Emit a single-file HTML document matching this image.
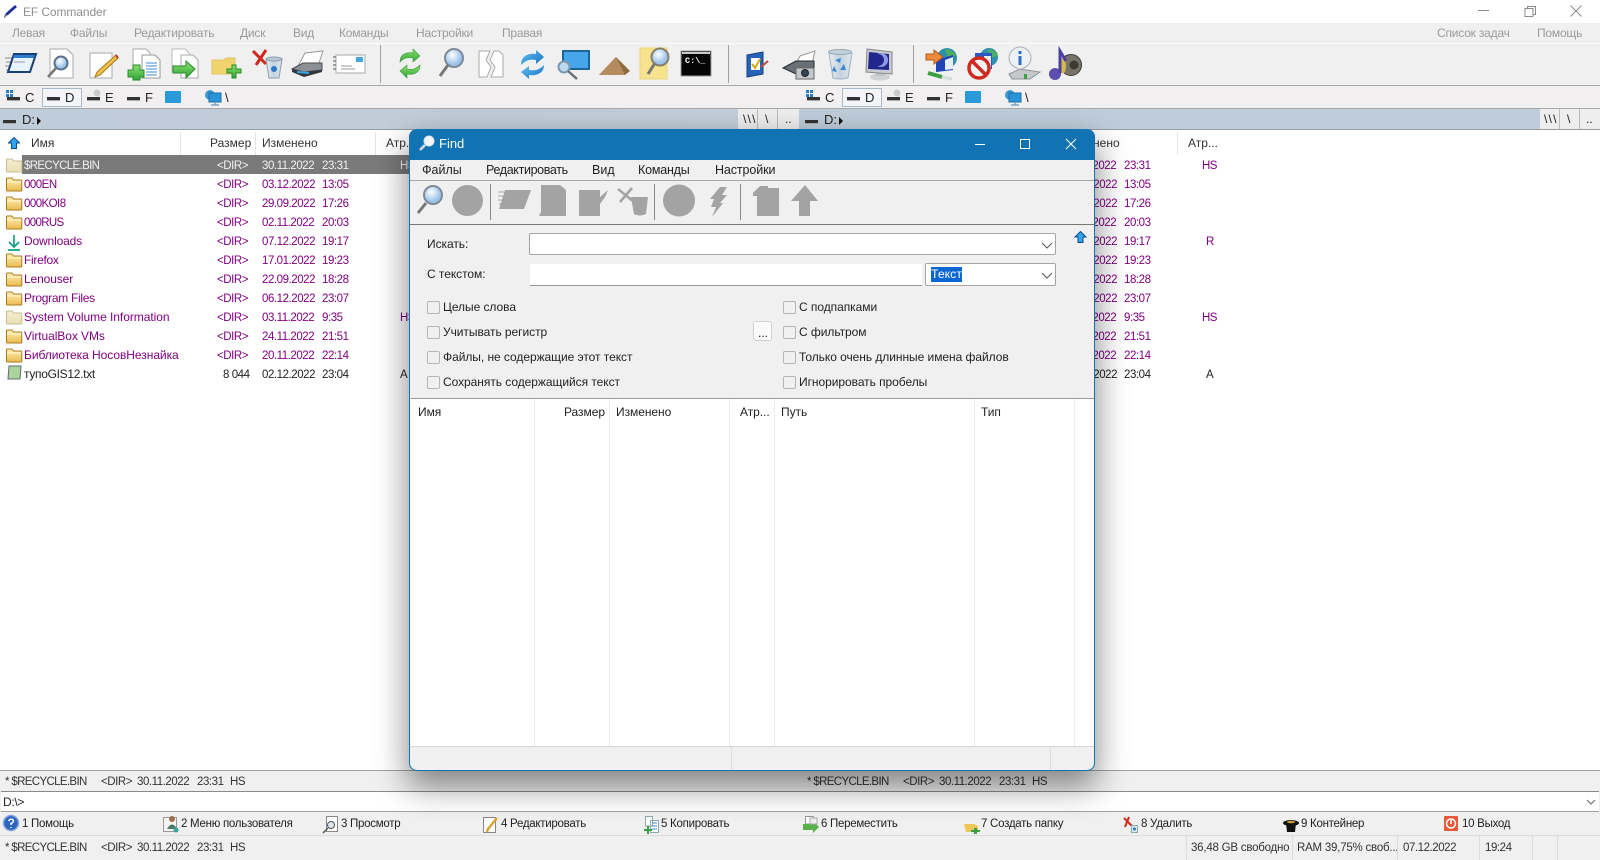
<!DOCTYPE html>
<html lang="ru"><head><meta charset="utf-8"><title>EF Commander</title>
<style>
html,body{margin:0;padding:0;background:#fff}
#p{position:relative;width:1600px;height:860px;overflow:hidden;background:#fff;font:12px/14px "Liberation Sans","Noto Sans CJK SC",sans-serif;color:#222}
#p div,#p span,#p svg{position:absolute}
.t{white-space:nowrap}
.m{color:#9a9a9a;top:26px;font-size:12px;letter-spacing:-.2px}
.dm{top:163px;font-size:12.5px;color:#222}
.h{top:136px;font-size:12px;color:#333}
.r{left:0;width:1600px;height:19px;color:#800080;font-size:12px}
.r span{top:3px;white-space:nowrap}
.f{color:#222}
.n{left:24px}
.d{left:217px}.a{left:262px}.b{left:322px}.x{left:400px}
.a2{left:1064px}.b2{left:1124px}.x2{left:1202px}
.d,.a,.b,.a2,.b2{font-size:11.5px;letter-spacing:-.45px}
.x,.x2{font-size:11.5px;letter-spacing:-.6px}
.r span.d,.r span.a,.r span.b,.r span.a2,.r span.b2,.r span.x,.r span.x2,.r span.c{top:4px}
.c{font-size:11.5px}
.l{background:#a8a8a8}
.cb{width:11px;height:11px;border:1px solid #b5b5b5;border-radius:2px;background:#f0f0f0}
.ct{font-size:12px;letter-spacing:-.05px;color:#222}
.fk{top:817px;font-size:11.5px;letter-spacing:-.27px;color:#222}
.st{top:841px;font-size:11.5px;letter-spacing:-.22px;color:#333}
.ss{font-size:11.5px;letter-spacing:-.45px;color:#333;white-space:nowrap}
.sn{letter-spacing:-.65px}
.dl{top:91px;font-size:13px;white-space:nowrap}
</style></head><body><div id="p">
<svg width="0" height="0" style="position:absolute"><defs>
<linearGradient id="gf" x1="0" y1="0" x2="0" y2="1"><stop offset="0" stop-color="#fff0b8"/><stop offset="1" stop-color="#eabb50"/></linearGradient>
<linearGradient id="gp" x1="0" y1="0" x2="0" y2="1"><stop offset="0" stop-color="#f4eecf"/><stop offset="1" stop-color="#eadfb4"/></linearGradient>
<linearGradient id="gb" x1="0" y1="0" x2="1" y2="1"><stop offset="0" stop-color="#62c3f5"/><stop offset="1" stop-color="#1570c0"/></linearGradient>
<linearGradient id="gg" x1="0" y1="0" x2="0" y2="1"><stop offset="0" stop-color="#8ee06a"/><stop offset="1" stop-color="#2ea63a"/></linearGradient>
<linearGradient id="gt" x1="0" y1="0" x2="1" y2="0"><stop offset="0" stop-color="#e6eef2"/><stop offset=".5" stop-color="#c2d2dc"/><stop offset="1" stop-color="#dfe8ec"/></linearGradient>
<radialGradient id="gl" cx=".4" cy=".35"><stop offset="0" stop-color="#fff"/><stop offset="1" stop-color="#9cc4ea"/></radialGradient>
<g id="fo"><path d="M.5 3.5V1.8Q.5 1 1.3 1H6L7.5 3H15Q15.8 3 15.8 3.8V13Q15.8 14 15 14H1.3Q.5 14 .5 13Z" fill="url(#gf)" stroke="#a97d1e"/><path d="M1 5H15.3" stroke="#fff6cf"/></g>
<g id="fp"><path d="M.5 3.5V1.8Q.5 1 1.3 1H6L7.5 3H15Q15.8 3 15.8 3.8V13Q15.8 14 15 14H1.3Q.5 14 .5 13Z" fill="url(#gp)" stroke="#c8bd95"/></g>
<g id="up"><path d="M5.5 0L11 5.5H8V11H3V5.5H0Z" fill="#31a6ec" stroke="#0b4d8e"/></g>
<g id="dr"><rect x="0" y="0" width="13" height="3" fill="#333"/><rect x="0" y="3" width="13" height="1" fill="#aaa"/></g>
<g id="nt"><circle cx="5" cy="6" r="5" fill="#3b9bd0"/><rect x="4" y="4" width="12" height="9" fill="#2b93d8" stroke="#1a6ea8"/><path d="M10 13V16M6 16H14" stroke="#7aa6c8" stroke-width="1.5"/></g>
</defs></svg>

<!-- title bar -->
<svg style="left:3px;top:3px" width="16" height="16" viewBox="0 0 16 16"><path d="M1 14L3 10L12 2L14 4L5 12Z" fill="#1c2f96"/><path d="M1 15L4 12" stroke="#999"/></svg>
<div class="t" style="left:23px;top:5px;font-size:12px;letter-spacing:-.1px;color:#8f8f8f">EF Commander</div>
<svg style="left:1470px;top:0" width="130" height="23" viewBox="0 0 130 23" fill="none" stroke="#8a8a8a"><path d="M8 10.5H19"/><path d="M55 8.500H63V16.500H55ZM57.500 8.500V6.500H65.500V14.500H63"/><path d="M100.500 5.500L111.500 16.500M111.500 5.500L100.500 16.500"/></svg>

<!-- menu -->
<div style="left:0;top:23px;width:1600px;height:20px;background:#f0f0f0"></div>
<span class="t m" style="left:12px">Левая</span><span class="t m" style="left:70px">Файлы</span><span class="t m" style="left:134px">Редактировать</span><span class="t m" style="left:240px">Диск</span><span class="t m" style="left:293px">Вид</span><span class="t m" style="left:339px">Команды</span><span class="t m" style="left:416px">Настройки</span><span class="t m" style="left:502px">Правая</span><span class="t m" style="left:1437px">Список задач</span><span class="t m" style="left:1537px">Помощь</span>

<!-- toolbar -->
<div style="left:0;top:43px;width:1600px;height:42px;background:#f0f0f0;border-top:1px solid #fafafa;box-sizing:border-box"></div>
<div class="l" style="left:0;top:85px;width:1600px;height:1px"></div>
<div style="left:0;top:86px;width:1600px;height:22px;background:#f1efef"></div>
<div class="l" style="left:0;top:108px;width:1600px;height:1px"></div>
<div style="left:0;top:109px;width:800px;height:20px;background:linear-gradient(90deg,#bfccd9,#c2ced9)"></div>
<div style="left:800px;top:109px;width:800px;height:20px;background:#bfcddb"></div>
<div style="left:0;top:129px;width:1600px;height:1px;background:#9a9a9a"></div>

<svg style="left:0;top:0" width="1600" height="130" viewBox="0 0 1600 130">
<!-- 1 window -->
<g><path d="M5 58H12M6 62H11M5 66H10M6 70H9" stroke="#8a8a8a"/><path d="M14 54H36L30 72H8Z" fill="#e9f3fb" stroke="#173f78" stroke-width="2"/><path d="M14 55H35L34 58H13Z" fill="#2f7fd0"/><path d="M14 62H25" stroke="#999"/></g>
<!-- 2 doc mag -->
<g><path d="M50 49H67L73 55V78H50Z" fill="#fff" stroke="#aaa"/><circle cx="61" cy="63" r="6.500" fill="url(#gl)" stroke="#5a6e86" stroke-width="2"/><path d="M56 68L48 77" stroke="#777" stroke-width="2.500"/></g>
<!-- 3 doc pencil -->
<g><path d="M90 53H112V78H90Z" fill="#fff" stroke="#aaa"/><path d="M116 55L118 58L100 75L95 77L97 72Z" fill="#f0c14a" stroke="#a8771c"/><path d="M116 55L118 58" stroke="#c0392b" stroke-width="2"/></g>
<!-- 4 docs plus -->
<g><path d="M133 49H146L150 53V72H133Z" fill="#fff" stroke="#aaa"/><path d="M142 55H155L160 60V78H142Z" fill="#fff" stroke="#999"/><path d="M146 63H157M146 66H157M146 69H157M146 72H157M146 75H157" stroke="#3b8fd0"/><path d="M133 65H140V70H144V77H140V80H133V77H128V70H133Z" fill="url(#gg)" stroke="#2a8a2e"/></g>
<!-- 5 docs arrow -->
<g><path d="M172 49H185L189 53V72H172Z" fill="#fff" stroke="#bbb"/><path d="M181 55H193L198 60V78H181Z" fill="#fff" stroke="#aaa"/><path d="M173 66H186V61L195 69L186 78V73H173Z" fill="url(#gg)" stroke="#2a8a2e"/></g>
<!-- 6 folder plus -->
<g><path d="M212 60H224L226 58H235V74H212Z" fill="#f0d36f" stroke="#e2c35b"/><path d="M232 65H236V69H241V73H236V78H232V73H227V69H232Z" fill="url(#gg)" stroke="#2a8a2e"/></g>
<!-- 7 delete -->
<g><path d="M253 51L266 64M266 50L256 65" stroke="#d0281c" stroke-width="3"/><path d="M266 59H282L279 78H269Z" fill="url(#gt)" stroke="#8aa0ac"/><ellipse cx="274" cy="59" rx="8" ry="2" fill="#b9c8d2" stroke="#8aa0ac"/><circle cx="274" cy="69" r="3" fill="#2f78c8"/></g>
<!-- 8 printer -->
<g><path d="M305 53L323 51L318 66H298Z" fill="#fff" stroke="#999"/><path d="M292 69L303 63H322V70L304 72Z" fill="#8b9095" stroke="#4a4e52"/><path d="M292 69L304 72L322 70V72L304 77L292 72Z" fill="#33373b"/><path d="M297 72L309 73" stroke="#37a6dd" stroke-width="2"/></g>
<!-- 9 envelope -->
<g><rect x="336" y="55" width="29" height="18" fill="#fff" stroke="#aaa"/><rect x="356" y="57" width="7" height="5" fill="#47a7d8"/><path d="M341 66H352M341 69H355" stroke="#999"/><path d="M333 57H336M333 61H336M333 65H336M333 69H336" stroke="#555"/></g>
<rect x="380" y="45" width="1" height="38" fill="#a0a0a0"/>
<!-- 10 green refresh -->
<g fill="url(#gg)" stroke="#3a9b3c" stroke-width=".6"><path d="M400 62C400 53 408 52 413 53V49L420 56L413 62V58C407 57 404 58 400 62Z"/><path d="M420 65C420 74 412 75 407 74V78L400 71L407 65V69C413 70 416 69 420 65Z"/></g>
<!-- 11 mag -->
<g><circle cx="454" cy="58" r="9" fill="url(#gl)" stroke="#7f8a96" stroke-width="2"/><path d="M448 65L440 76" stroke="#777" stroke-width="3"/></g>
<!-- 12 split doc -->
<g fill="#fff" stroke="#aaa"><path d="M479 51H490L486 60L491 67L487 77H479Z"/><path d="M494 51H499L503 55V77H491L495 67L490 60Z"/></g>
<!-- 13 blue sync -->
<g fill="url(#gb)"><path d="M521 65C521 55 530 53 536 54V50L544 57L536 64V60C530 59 526 60 521 65Z"/><path d="M544 65C544 74 535 76 529 75V79L521 72L529 66V70C535 71 539 70 544 65Z"/></g>
<!-- 14 monitor -->
<g><rect x="563" y="51" width="26" height="18" fill="#45a6ec" stroke="#1c6696" stroke-width="2"/><circle cx="564" cy="67" r="5.500" fill="#bcd8f0" stroke="#7d98b0" stroke-width="2"/><path d="M568 71L577 79" stroke="#66707a" stroke-width="2.500"/></g>
<!-- 15 pyramid -->
<g><path d="M599 75L616 57L630 71L625 75Z" fill="#8e6a3c"/><path d="M616 57L625 75H599Z" fill="#b48b5c"/></g>
<!-- 16 folder mag -->
<g><rect x="640" y="48" width="27" height="31" fill="#f7e28d" stroke="#ecd67a"/><circle cx="660" cy="57" r="8.500" fill="url(#gl)" stroke="#86806a" stroke-width="2"/><path d="M655 63L648 74" stroke="#777" stroke-width="3"/></g>
<!-- 17 cmd -->
<g><rect x="681" y="51" width="30" height="25" fill="#050505" stroke="#9a9a9a"/><rect x="682" y="52" width="28" height="2" fill="#c8c8c8"/><text x="685" y="63" fill="#fff" font-family="Liberation Mono,monospace" font-size="8.500" font-weight="700">C:\_</text></g>
<rect x="728" y="45" width="1" height="38" fill="#a0a0a0"/>
<!-- 18 check -->
<g><path d="M747 55L763 52V74L747 77Z" fill="#2663b8" stroke="#15407e"/><rect x="751" y="58" width="9" height="12" fill="#fff"/><path d="M752 64L755 68L760 59" fill="none" stroke="#d6a91a" stroke-width="2"/><path d="M761 67L768 61" stroke="#c04a3a" stroke-width="2"/></g>
<!-- 19 printer camera -->
<g><path d="M800 56L815 51L812 64H796Z" fill="#fff" stroke="#999"/><path d="M783 68L796 61H814V68L796 74Z" fill="#6a7075" stroke="#24282c"/><rect x="796" y="68" width="18" height="11" fill="#c4c8cc" stroke="#666"/><circle cx="805" cy="73" r="3.500" fill="#345" stroke="#222"/></g>
<!-- 20 recycle -->
<g><path d="M829 53H852L848 78Q840 80 833 78Z" fill="url(#gt)" stroke="#9fb2bf"/><ellipse cx="840" cy="52" rx="11.500" ry="2.500" fill="#c3d2dc" stroke="#95a8b5"/><path d="M835 60L841 58L840 63ZM844 64L846 70L840 70ZM834 66L837 72L832 71Z" fill="#3b86d2"/></g>
<!-- 21 monitor -->
<g><ellipse cx="880" cy="77" rx="10" ry="3.500" fill="#cfd1d2"/><rect x="876" y="71" width="8" height="5" fill="#bfc1c2"/><path d="M867 49L892 52V74L866 72Z" fill="#c8cbd0" stroke="#888"/><path d="M869 52L889 54V70L868 69Z" fill="#22268c"/><circle cx="881" cy="60" r="7" fill="#8f9be2"/><circle cx="878" cy="60" r="6" fill="#22268c"/></g>
<rect x="913" y="45" width="1" height="38" fill="#a0a0a0"/>
<!-- 22 -->
<g><circle cx="947" cy="58" r="10" fill="#2f8fb0"/><path d="M945 49Q954 50 956 56L948 58Z" fill="#4cae5e"/><path d="M936 60L953 55V70L936 72Z" fill="#1f44b8"/><path d="M945 60L953 57V69L945 70Z" fill="#e8eef6"/><path d="M926 54H934V50L943 57L934 64V60H926Z" fill="#ee8a3c" stroke="#b05c15"/><path d="M928 73L942 77" stroke="#3aa043" stroke-width="4"/><path d="M942 77L952 79" stroke="#d8dcdc" stroke-width="3"/></g>
<!-- 23 -->
<g><circle cx="989" cy="57" r="9" fill="#2f8fb0"/><path d="M988 49Q996 50 998 56L990 58Z" fill="#4cae5e"/><rect x="975" y="53" width="17" height="16" fill="#2d58c0"/><rect x="984" y="56" width="7" height="12" fill="#e8eef6"/><circle cx="979" cy="68" r="10" fill="#f4f4f4" stroke="#cf2a20" stroke-width="3.500"/><path d="M972 61L986 75" stroke="#cf2a20" stroke-width="3.500"/></g>
<!-- 24 -->
<g><path d="M1020 47C1014 47 1009 52 1009 58C1009 63 1013 67 1017 68L1020 72L1023 68C1027 67 1031 63 1031 58C1031 52 1026 47 1020 47Z" fill="#eef1f4" stroke="#aab0b8"/><rect x="1018.500" y="56" width="3" height="9" fill="#2a6ec8"/><rect x="1018.500" y="51" width="3" height="3" fill="#2a6ec8"/><path d="M1009 74L1020 69L1040 72L1030 79H1012Z" fill="#c5c8cb" stroke="#8e9296"/><rect x="1024" y="74" width="3" height="5" fill="#3aa043"/></g>
<!-- 25 -->
<g><circle cx="1071" cy="65" r="10.500" fill="#77736a" stroke="#3d3a34"/><circle cx="1074" cy="65" r="4.500" fill="#3c3a34"/><ellipse cx="1063" cy="66" rx="3" ry="7.500" fill="#d8b94e"/><circle cx="1055" cy="74" r="6" fill="#5c4fb0"/><path d="M1060 73V51L1066 61" fill="none" stroke="#4b40a0" stroke-width="3"/></g>

<!-- drive bars -->
<g id="dv"><rect x="6" y="90" width="3" height="3" fill="#2a7cc8"/><rect x="10" y="90" width="3" height="3" fill="#2a7cc8"/><rect x="6" y="94" width="3" height="3" fill="#2a7cc8"/><rect x="10" y="94" width="3" height="3" fill="#2a7cc8"/><use href="#dr" x="7" y="97"/>
<rect x="42.500" y="88.500" width="39" height="18" fill="#f3f5f8" stroke="#a9b8cc"/><use href="#dr" x="47" y="97"/><use href="#dr" x="87" y="97"/><circle cx="97" cy="93" r="3.500" fill="#ccc"/><use href="#dr" x="127" y="97"/><rect x="165" y="91" width="16" height="12" rx="1" fill="#2a9bd8"/><use href="#nt" x="205" y="89"/></g>
<use href="#dv" x="800"/>
<use href="#dr" x="3" y="120"/><path d="M37 117L41 121L37 125Z" fill="#111"/><use href="#dr" x="805" y="120"/><path d="M839 117L843 121L839 125Z" fill="#111"/>
</svg>
<span class="dl" style="left:25px">C</span><span class="dl" style="left:65px">D</span><span class="dl" style="left:105px">E</span><span class="dl" style="left:145px">F</span><span class="dl" style="left:225px">\</span>
<span class="dl" style="left:825px">C</span><span class="dl" style="left:865px">D</span><span class="dl" style="left:905px">E</span><span class="dl" style="left:945px">F</span><span class="dl" style="left:1025px">\</span>
<span class="t" style="left:22px;top:113px;font-size:13px">D:</span><span class="t" style="left:824px;top:113px;font-size:13px">D:</span>
<!-- path buttons -->
<div style="left:738px;top:109px;width:61px;height:20px;background:#eee"></div><div style="left:757px;top:109px;width:1px;height:20px;background:#bbb"></div><div style="left:777px;top:109px;width:1px;height:20px;background:#bbb"></div>
<span class="t" style="left:743px;top:112px;letter-spacing:1.2px">\\\</span><span class="t" style="left:765px;top:112px">\</span><span class="t" style="left:785px;top:112px">..</span>
<div style="left:1540px;top:109px;width:60px;height:20px;background:#eee"></div><div style="left:1559px;top:109px;width:1px;height:20px;background:#bbb"></div><div style="left:1579px;top:109px;width:1px;height:20px;background:#bbb"></div>
<span class="t" style="left:1544px;top:112px;letter-spacing:1.2px">\\\</span><span class="t" style="left:1567px;top:112px">\</span><span class="t" style="left:1586px;top:112px">..</span>

<!-- headers -->
<svg style="left:8px;top:137px" width="12" height="12" viewBox="-.5 -.5 12 12"><use href="#up"/></svg>
<span class="t h" style="left:31px">Имя</span><span class="t h" style="left:210px">Размер</span><span class="t h" style="left:262px">Изменено</span><span class="t h" style="left:386px">Атр...</span>
<div style="left:180px;top:132px;width:1px;height:23px;background:#e5e5e5"></div><div style="left:255px;top:132px;width:1px;height:23px;background:#e5e5e5"></div><div style="left:375px;top:132px;width:1px;height:23px;background:#e5e5e5"></div><div style="left:1177px;top:132px;width:1px;height:23px;background:#e5e5e5"></div>
<span class="t h" style="left:1064px">Изменено</span><span class="t h" style="left:1188px">Атр...</span>

<!-- rows -->
<div style="left:22px;top:155px;width:778px;height:19px;background:#7a7a7a"></div>
<div class="r" style="top:155px;color:#f2f2f2"><span class="n c" style="letter-spacing:-.65px">$RECYCLE.BIN</span><span class="d">&lt;DIR&gt;</span><span class="a">30.11.2022</span><span class="b">23:31</span><span class="x">HS</span></div>
<div class="r" style="top:155px"><span class="a2">30.11.2022</span><span class="b2">23:31</span><span class="x2">HS</span></div>
<div class="r" style="top:174px"><span class="n c" style="letter-spacing:-.5px">000EN</span><span class="d">&lt;DIR&gt;</span><span class="a">03.12.2022</span><span class="b">13:05</span><span class="a2">03.12.2022</span><span class="b2">13:05</span></div>
<div class="r" style="top:193px"><span class="n c" style="letter-spacing:-.55px">000KOI8</span><span class="d">&lt;DIR&gt;</span><span class="a">29.09.2022</span><span class="b">17:26</span><span class="a2">29.09.2022</span><span class="b2">17:26</span></div>
<div class="r" style="top:212px"><span class="n c" style="letter-spacing:-.65px">000RUS</span><span class="d">&lt;DIR&gt;</span><span class="a">02.11.2022</span><span class="b">20:03</span><span class="a2">02.11.2022</span><span class="b2">20:03</span></div>
<div class="r" style="top:231px"><span class="n" style="letter-spacing:-.15px">Downloads</span><span class="d">&lt;DIR&gt;</span><span class="a">07.12.2022</span><span class="b">19:17</span><span class="a2">07.12.2022</span><span class="b2">19:17</span><span class="x2" style="left:1206px">R</span></div>
<div class="r" style="top:250px"><span class="n" style="letter-spacing:-.3px">Firefox</span><span class="d">&lt;DIR&gt;</span><span class="a">17.01.2022</span><span class="b">19:23</span><span class="a2">17.01.2022</span><span class="b2">19:23</span></div>
<div class="r" style="top:269px"><span class="n" style="letter-spacing:-.12px">Lenouser</span><span class="d">&lt;DIR&gt;</span><span class="a">22.09.2022</span><span class="b">18:28</span><span class="a2">22.09.2022</span><span class="b2">18:28</span></div>
<div class="r" style="top:288px"><span class="n" style="letter-spacing:-.3px">Program Files</span><span class="d">&lt;DIR&gt;</span><span class="a">06.12.2022</span><span class="b">23:07</span><span class="a2">06.12.2022</span><span class="b2">23:07</span></div>
<div class="r" style="top:307px"><span class="n" style="letter-spacing:-.05px">System Volume Information</span><span class="d">&lt;DIR&gt;</span><span class="a">03.11.2022</span><span class="b">9:35</span><span class="x">HS</span><span class="a2">03.11.2022</span><span class="b2">9:35</span><span class="x2">HS</span></div>
<div class="r" style="top:326px"><span class="n" style="letter-spacing:-.07px">VirtualBox VMs</span><span class="d">&lt;DIR&gt;</span><span class="a">24.11.2022</span><span class="b">21:51</span><span class="a2">24.11.2022</span><span class="b2">21:51</span></div>
<div class="r" style="top:345px"><span class="n" style="letter-spacing:-.05px">Библиотека НосовНезнайка</span><span class="d">&lt;DIR&gt;</span><span class="a">20.11.2022</span><span class="b">22:14</span><span class="a2">20.11.2022</span><span class="b2">22:14</span></div>
<div class="r f" style="top:364px"><span class="n" style="letter-spacing:-.3px">тупоGIS12.txt</span><span class="d" style="left:223px">8 044</span><span class="a">02.12.2022</span><span class="b">23:04</span><span class="x">A</span><span class="a2">02.12.2022</span><span class="b2">23:04</span><span class="x2" style="left:1206px">A</span></div>
<svg style="left:6px;top:155px" width="17" height="230" viewBox="0 0 17 230">
<use href="#fp" y="3"/><use href="#fo" y="22"/><use href="#fo" y="41"/><use href="#fo" y="60"/>
<path d="M8 80V92M3 87L8 92L13 87M2 95H14" fill="none" stroke="#14a085" stroke-width="1.700"/>
<use href="#fo" y="98"/><use href="#fo" y="117"/><use href="#fo" y="136"/><use href="#fp" y="155"/><use href="#fo" y="174"/><use href="#fo" y="193"/>
<path d="M3 211H15L14 224H2Z" fill="#a9d59a" stroke="#667"/>
</svg>

<!-- bottom -->
<div style="left:0;top:770px;width:1600px;height:90px;background:#f0f0f0"></div>
<div style="left:0;top:770px;width:1600px;height:1px;background:#a0a0a0"></div>
<span class="ss sn" style="left:5px;top:775px">* $RECYCLE.BIN</span><span class="ss" style="left:101px;top:775px">&lt;DIR&gt;</span><span class="ss" style="left:137px;top:775px">30.11.2022</span><span class="ss" style="left:197px;top:775px">23:31</span><span class="ss" style="left:230px;top:775px">HS</span>
<span class="ss sn" style="left:807px;top:775px">* $RECYCLE.BIN</span><span class="ss" style="left:903px;top:775px">&lt;DIR&gt;</span><span class="ss" style="left:939px;top:775px">30.11.2022</span><span class="ss" style="left:999px;top:775px">23:31</span><span class="ss" style="left:1032px;top:775px">HS</span>
<div style="left:1px;top:791px;width:1598px;height:21px;background:#fff;border-top:1px solid #8a8a8a;border-bottom:1px solid #a0a0a0;box-sizing:border-box"></div>
<span class="t" style="left:3px;top:795px;font-size:12px;letter-spacing:-.3px">D:\&gt;</span>
<svg style="left:1585px;top:797px" width="12" height="10" viewBox="0 0 12 10"><path d="M2 3L6 7L10 3" fill="none" stroke="#666"/></svg>
<div style="left:0;top:835px;width:1600px;height:1px;background:#dcdcdc"></div>

<span class="t fk" style="left:22px">1 Помощь</span><span class="t fk" style="left:181px">2 Меню пользователя</span><span class="t fk" style="left:341px">3 Просмотр</span><span class="t fk" style="left:501px">4 Редактировать</span><span class="t fk" style="left:661px">5 Копировать</span><span class="t fk" style="left:821px">6 Переместить</span><span class="t fk" style="left:981px">7 Создать папку</span><span class="t fk" style="left:1141px">8 Удалить</span><span class="t fk" style="left:1301px">9 Контейнер</span><span class="t fk" style="left:1462px">10 Выход</span>
<svg style="left:0;top:812px" width="1480" height="24" viewBox="0 0 1480 24">
<circle cx="11" cy="11" r="7.500" fill="#2a63c0" stroke="#89a8d8" stroke-width="1.500"/><path d="M8.500 9Q11 5.500 13.500 8.500Q13.500 10.500 11 11.500V13M11 15V16" fill="none" stroke="#fff" stroke-width="1.500"/>
<rect x="163.500" y="5.500" width="13" height="14" fill="#f4f4f4" stroke="#999"/><circle cx="172" cy="7" r="3" fill="#a0724a"/><path d="M167 17Q172 8 177 17Z" fill="#4b7a66"/><circle cx="176" cy="18" r="2.500" fill="#3aa39a"/>
<path d="M326.500 4.500H337.500V19.500H326.500Z" fill="#fff" stroke="#888"/><circle cx="331" cy="13" r="3.500" fill="#dbe8f3" stroke="#555"/><path d="M328 16L323 21" stroke="#555" stroke-width="1.500"/>
<rect x="483.500" y="5.500" width="12" height="15" fill="#fff" stroke="#888"/><path d="M497 6L488 17L487 20" fill="none" stroke="#d9a431" stroke-width="2.500"/>
<path d="M645.500 4.500H652.500V14H645.500ZM650.500 8.500H658.500V20.500H650.500Z" fill="#fff" stroke="#8aa"/><path d="M652 11H657M652 14H657M652 17H657" stroke="#3b8fd0"/><path d="M644 17H647V14H649V17H652V19H649V22H647V19H644Z" fill="#3aa043"/>
<path d="M805.500 4.500H813.500V12H805.500Z" fill="#fff" stroke="#999"/><path d="M803 12H813V9L819 15L813 21V18H803Z" fill="#58b148"/><rect x="810" y="6" width="7" height="6" fill="#eee" stroke="#aaa"/>
<path d="M964 12H974L978 14V20H966Z" fill="#efc758"/><path d="M974 16H977V18H980V20H977V22H974V20H971V18H974Z" fill="#3aa043"/>
<path d="M1124 6L1133 15M1129 5L1125 15" stroke="#d0281c" stroke-width="2"/><rect x="1131.500" y="13.500" width="6" height="7" fill="#dce8f0" stroke="#8aa"/><circle cx="1134.500" cy="17" r="1.500" fill="#2f78c8"/>
<ellipse cx="1291" cy="11" rx="8" ry="3" fill="#111"/><path d="M1286 11H1296L1295 20H1287Z" fill="#111"/><ellipse cx="1291" cy="10" rx="4" ry="1.300" fill="#c9a030"/>
<rect x="1444" y="4" width="14" height="15" rx="1" fill="#e8583a"/><circle cx="1451" cy="11.500" r="4.500" fill="none" stroke="#fff" stroke-width="1.500"/><path d="M1451 8V12" stroke="#fff" stroke-width="1.500"/>
</svg>
<span class="ss sn" style="left:5px;top:841px">* $RECYCLE.BIN</span><span class="ss" style="left:101px;top:841px">&lt;DIR&gt;</span><span class="ss" style="left:137px;top:841px">30.11.2022</span><span class="ss" style="left:197px;top:841px">23:31</span><span class="ss" style="left:230px;top:841px">HS</span>
<span class="t st" style="left:1191px">36,48 GB свободно</span><span class="t st" style="left:1297px">RAM 39,75% своб...</span><span class="t st" style="left:1403px;letter-spacing:-.45px">07.12.2022</span><span class="t st" style="left:1485px;letter-spacing:-.45px">19:24</span>
<div style="left:1186px;top:836px;width:1px;height:24px;background:#dcdcdc"></div><div style="left:1292px;top:836px;width:1px;height:24px;background:#dcdcdc"></div><div style="left:1397px;top:836px;width:1px;height:24px;background:#dcdcdc"></div><div style="left:1479px;top:836px;width:1px;height:24px;background:#dcdcdc"></div><div style="left:1532px;top:836px;width:1px;height:24px;background:#dcdcdc"></div><div style="left:1557px;top:836px;width:1px;height:24px;background:#dcdcdc"></div>

<!-- Dialog -->
<div style="left:409px;top:129px;width:686px;height:642px;background:#f0f0f0;border-radius:8px;box-sizing:border-box;border:1px solid #1173b3;border-top:0;box-shadow:0 14px 32px 2px rgba(0,0,0,.45)"></div>
<div style="left:409px;top:129px;width:686px;height:31px;background:#1173b3;border-radius:8px 8px 0 0"></div>
<svg style="left:418px;top:134px" width="18" height="20" viewBox="0 0 18 20"><circle cx="11" cy="7" r="5" fill="#eef5fb" stroke="#dbe6ee"/><path d="M7 11L2 16" stroke="#ddd" stroke-width="2.500"/></svg>
<span class="t" style="left:439px;top:137px;font-size:13px;color:#fff">Find</span>
<svg style="left:960px;top:129px" width="135" height="31" viewBox="0 0 135 31" fill="none" stroke="#fff"><path d="M15 15.500H25"/><path d="M60.500 10.500H69.500V19.500H60.500Z"/><path d="M106 10L116 20M116 10L106 20"/></svg>
<span class="t dm" style="left:422px">Файлы</span><span class="t dm" style="left:486px;letter-spacing:-.35px">Редактировать</span><span class="t dm" style="left:592px">Вид</span><span class="t dm" style="left:638px;letter-spacing:-.2px">Команды</span><span class="t dm" style="left:715px;letter-spacing:-.1px">Настройки</span>
<div class="l" style="left:410px;top:180px;width:684px;height:1px"></div>
<div style="left:410px;top:224px;width:684px;height:1px;background:#777"></div>
<svg style="left:410px;top:181px" width="420" height="43" viewBox="410 181 420 43">
<circle cx="433" cy="195" r="9" fill="url(#gl)" stroke="#7f8a96" stroke-width="2"/><path d="M426 203L418 213" stroke="#777" stroke-width="3"/>
<g fill="#a3a3a3"><circle cx="467.500" cy="200.500" r="15.500"/>
<path d="M505 190H531L524 209H499Z"/><path d="M498 192H504M498 196H503M498 200H502M499 204H501" stroke="#a3a3a3"/>
<path d="M541 185H560L566 190V216H539L541 212Z"/><path d="M579 190H600V197L608 190L605 197L600 204V216H579Z"/>
<path d="M631 197H648L646 214Q640 217 634 214Z"/><path d="M618 189L634 202M632 188L620 202" stroke="#a3a3a3" stroke-width="2.500" fill="none"/>
<circle cx="679" cy="200.500" r="16"/><path d="M720 187H727L722 195H727L720 203H723L712 217L716 207H711L714 199H710Z"/>
<path d="M753 193L760 186H768V188H779V216H757V196H753Z"/><path d="M805 185L818 201H810V216H799V201H791Z"/></g>
<g fill="#8a8a8a"><rect x="490" y="184" width="1" height="36"/><rect x="654" y="184" width="1" height="36"/><rect x="740" y="184" width="1" height="36"/></g>
</svg>
<span class="t ct" style="left:427px;top:237px">Искать:</span><span class="t ct" style="left:427px;top:267px">С текстом:</span>
<div style="left:529px;top:233px;width:527px;height:22px;background:#fff;border:1px solid #a5a5a5;border-radius:2px;box-sizing:border-box"></div>
<div style="left:530px;top:264px;width:392px;height:22px;background:#fff;border-bottom:1px solid #999;box-sizing:border-box"></div>
<div style="left:925px;top:263px;width:131px;height:23px;background:#fff;border:1px solid #a5a5a5;border-radius:2px;box-sizing:border-box"></div>
<span class="t" style="left:931px;top:267px;height:15px;background:#0a66d0;color:#fff;font-size:12.3px;line-height:15px">Текст</span>
<svg style="left:1040px;top:238px" width="14" height="44" viewBox="0 0 14 44" fill="none" stroke="#555"><path d="M2 5L7 10L12 5M2 35L7 40L12 35"/></svg>
<svg style="left:1074px;top:231px" width="13" height="13" viewBox="-1 -.5 13 13"><use href="#up"/></svg>

<div class="cb" style="left:427px;top:301px"></div><span class="t ct" style="left:443px;top:300px">Целые слова</span>
<div class="cb" style="left:427px;top:326px"></div><span class="t ct" style="left:443px;top:325px">Учитывать регистр</span>
<div class="cb" style="left:427px;top:351px"></div><span class="t ct" style="left:443px;top:350px">Файлы, не содержащие этот текст</span>
<div class="cb" style="left:427px;top:376px"></div><span class="t ct" style="left:443px;top:375px">Сохранять содержащийся текст</span>
<div class="cb" style="left:783px;top:301px"></div><span class="t ct" style="left:799px;top:300px">С подпапками</span>
<div class="cb" style="left:783px;top:326px"></div><span class="t ct" style="left:799px;top:325px">С фильтром</span>
<div class="cb" style="left:783px;top:351px"></div><span class="t ct" style="left:799px;top:350px">Только очень длинные имена файлов</span>
<div class="cb" style="left:783px;top:376px"></div><span class="t ct" style="left:799px;top:375px">Игнорировать пробелы</span>
<div style="left:753px;top:321px;width:19px;height:20px;background:#fbfbfb;border:1px solid #d0d0d0;border-radius:3px;box-sizing:border-box"></div><span class="t" style="left:758px;top:326px;font-size:12px">...</span>

<div style="left:411px;top:398px;width:683px;height:348px;background:#fff;border-top:1px solid #9a9a9a;box-sizing:border-box"></div>
<span class="t ct" style="left:418px;top:405px">Имя</span><span class="t ct" style="left:564px;top:405px">Размер</span><span class="t ct" style="left:616px;top:405px">Изменено</span><span class="t ct" style="left:740px;top:405px">Атр...</span><span class="t ct" style="left:781px;top:405px">Путь</span><span class="t ct" style="left:981px;top:405px">Тип</span>
<div style="left:534px;top:399px;width:1px;height:347px;background:#ececec"></div><div style="left:609px;top:399px;width:1px;height:347px;background:#ececec"></div><div style="left:729px;top:399px;width:1px;height:347px;background:#ececec"></div><div style="left:774px;top:399px;width:1px;height:347px;background:#ececec"></div><div style="left:974px;top:399px;width:1px;height:347px;background:#ececec"></div><div style="left:1074px;top:399px;width:1px;height:347px;background:#ececec"></div>
<div style="left:411px;top:746px;width:683px;height:1px;background:#d5d5d5"></div>
<div style="left:731px;top:747px;width:1px;height:23px;background:#dcdcdc"></div><div style="left:1050px;top:747px;width:1px;height:23px;background:#dcdcdc"></div>
</div></body></html>
